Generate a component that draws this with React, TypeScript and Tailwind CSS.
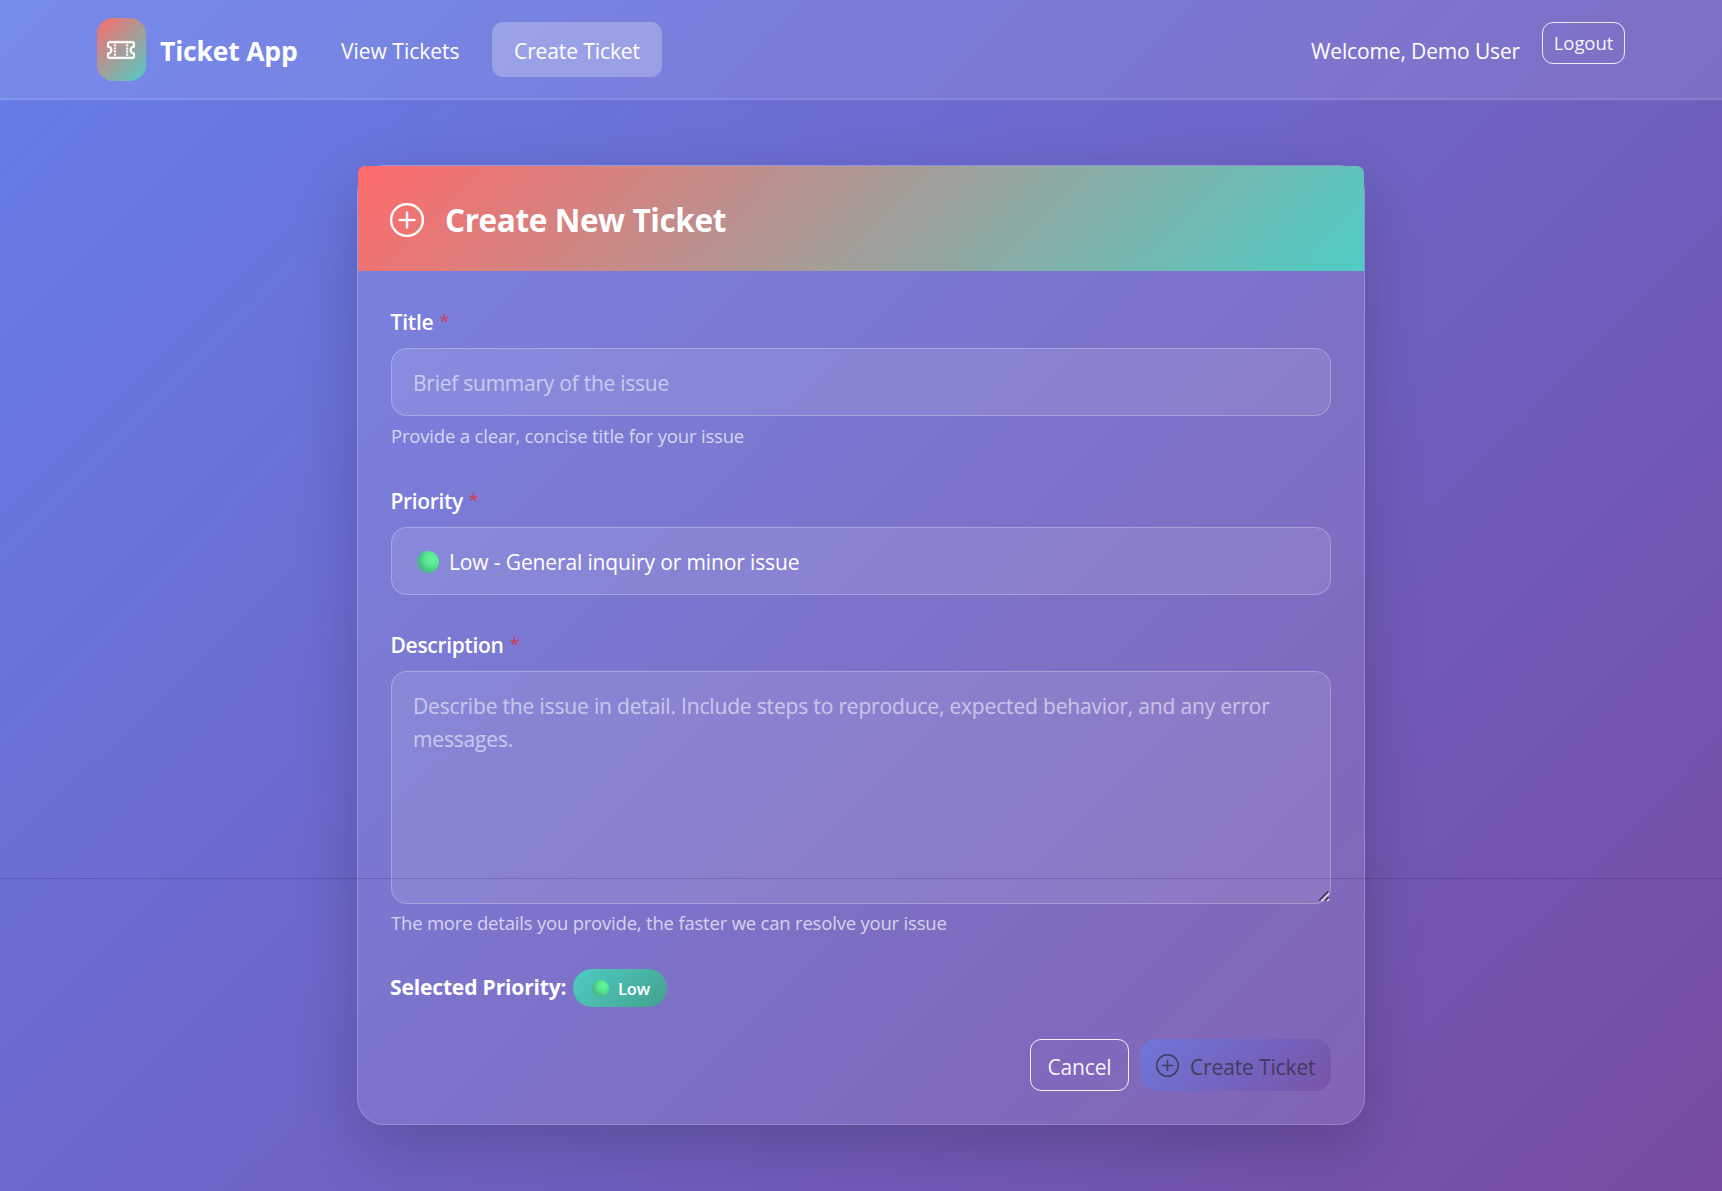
import type { ReactNode } from "react";
import { BsPlusCircle, BsTicketPerforated } from "react-icons/bs";

function GreenDot({ className }: { className: string }) {
  return (
    <span
      className={`inline-block shrink-0 rounded-full bg-[radial-gradient(circle_at_68%_36%,#66f79c_0%,#58e48f_35%,#46b883_68%,#6cbaa8_88%)] ${className}`}
    />
  );
}

function Label({ children, tracking }: { children: ReactNode; tracking: string }) {
  return (
    <label className="-ml-[0.5px] flex h-[33px] items-start gap-[6px] pt-px text-[21px] font-semibold leading-[33px]">
      <span className={tracking}>{children}</span>
      <span className="text-[18px] leading-[30px] text-[#dc3545]/80">*</span>
    </label>
  );
}

const field =
  "block w-full rounded-[16px] border border-white/25 bg-white/10 px-[21px] text-[21px] leading-[33px] text-white outline-none placeholder:text-white/55 placeholder:opacity-100";

function Navbar() {
  return (
    <nav className="flex h-[100px] items-start justify-between border-b-2 border-white/10 bg-white/10 px-[97px]">
      <div className="flex items-start">
        <div className="mt-[18px] flex h-[63px] w-[49px] items-center justify-center rounded-[16px] bg-[linear-gradient(135deg,#ff6b6b,#4ecdc4)]">
          <BsTicketPerforated className="mr-px size-[28px]" stroke="currentColor" strokeWidth={0.3} />
        </div>
        <span className="mt-[22px] ml-[14px] w-[138px] whitespace-nowrap pt-[2px] text-[26.5px] font-bold leading-[55px] tracking-[-0.19px]">
          Ticket App
        </span>
        <a className="mt-[22px] ml-[21px] w-[162px] whitespace-nowrap rounded-[11px] pt-[2px] pl-[22px] text-[21px] leading-[55px]">
          View Tickets
        </a>
        <a className="mt-[22px] ml-[11px] h-[55px] w-[170px] whitespace-nowrap rounded-[11px] bg-white/25 pt-[2px] pl-[22px] text-[21px] leading-[55px] tracking-[-0.1px]">
          Create Ticket
        </a>
      </div>
      <div className="flex items-start">
        <span className="mt-[22px] w-[231px] whitespace-nowrap pt-[2px] text-[21px] leading-[55px] tracking-[-0.14px]">
          Welcome, Demo User
        </span>
        <button className="mt-[22px] h-[42px] w-[83px] whitespace-nowrap rounded-[11px] border border-white/85 text-[18.5px] leading-[40px] tracking-[-0.06px] text-white/95">
          Logout
        </button>
      </div>
    </nav>
  );
}

export default function App() {
  return (
    <div
      className="relative h-[1191px] w-full overflow-hidden bg-[linear-gradient(135deg,#667eea_0%,#764ba2_100%)] text-white"
      style={{ fontFamily: '"Open Sans", "Noto Sans", sans-serif' }}
    >
      <Navbar />
      <main className="flex justify-center pt-[65px]">
        <section className="h-[960px] w-[1008px] rounded-[27px] border border-white/20 bg-white/10 shadow-[0_22px_62px_rgba(0,0,0,0.19)]">
          <header className="flex h-[105px] items-center rounded-t-[7px] bg-[linear-gradient(135deg,#ff6b6b,#4ecdc4)] pt-[2px] pl-[32px]">
            <BsPlusCircle className="size-[34px]" stroke="currentColor" strokeWidth={0.15} />
            <h1 className="ml-[21px] whitespace-nowrap text-[31.5px] font-bold leading-[40px] tracking-[-0.4px]">
              Create New Ticket
            </h1>
          </header>
          <form className="px-[33px] pt-[34px]">
            <Label tracking="tracking-[-0.2px]">Title</Label>
            <input
              className={`${field} mt-[10px] h-[68px] pt-[2px] tracking-[-0.25px]`}
              placeholder="Brief summary of the issue"
            />
            <p className="mt-[6px] text-[18.5px] leading-[28px] tracking-[-0.18px] text-white/70">
              Provide a clear, concise title for your issue
            </p>

            <div className="mt-[34px]">
              <Label tracking="tracking-[-0.35px]">Priority</Label>
              <div className={`${field} mt-[10px] h-[68px]`}>
                <div className="flex h-full items-center">
                  <GreenDot className="mt-px ml-[4px] size-[22px]" />
                  <span className="ml-[10px] whitespace-nowrap pt-[2px] tracking-[-0.13px]">
                    Low - General inquiry or minor issue
                  </span>
                </div>
              </div>
            </div>

            <div className="mt-[33px]">
              <Label tracking="tracking-[-0.3px]">Description</Label>
              <div className="relative mt-[10px]">
                <textarea
                  className={`${field} h-[233px] resize-none pt-[18px] tracking-[-0.17px]`}
                  placeholder="Describe the issue in detail. Include steps to reproduce, expected behavior, and any error messages."
                />
                <svg className="absolute right-[1px] bottom-[2px] size-[12px]" viewBox="0 0 12 12" fill="none">
                  <path d="M3.3 11L11 3.3M9 11.2L11.2 9" stroke="#e6dcf2" strokeWidth="1.7" />
                  <path d="M1.2 10.5L10.2 1.5M7.2 10.5L10.5 7.2" stroke="#3d3450" strokeWidth="1.7" />
                </svg>
              </div>
              <p className="mt-[5px] text-[18.5px] leading-[28px] tracking-[-0.2px] text-white/70">
                The more details you provide, the faster we can resolve your issue
              </p>
            </div>

            <div className="mt-[32px] flex h-[38px] items-center">
              <strong className="-ml-px w-[183px] whitespace-nowrap pb-[2px] text-[21px] font-bold leading-[38px] tracking-[-0.14px]">
                Selected Priority:
              </strong>
              <span className="flex h-[38px] w-[94px] items-center rounded-full bg-[linear-gradient(135deg,#4ecdc4,#44a08d)] pl-[19px] text-[16.5px] font-semibold leading-[38px] tracking-[-0.1px]">
                <GreenDot className="size-[17px]" />
                <span className="ml-[9px] pt-px">Low</span>
              </span>
            </div>

            <div className="mt-[32px] flex justify-end gap-[11px]">
              <button
                type="button"
                className="h-[52px] w-[99px] rounded-[11px] border border-white/90 pt-[2px] text-[21px] leading-[50px] tracking-[-0.16px] text-white/95"
              >
                Cancel
              </button>
              <button
                type="button"
                disabled
                className="flex h-[52px] w-[191px] items-center rounded-[16px] bg-[linear-gradient(135deg,#667eea,#764ba2)] pl-[16px] text-[21px] leading-[52px] tracking-[-0.14px] text-[#212529] opacity-65"
              >
                <BsPlusCircle className="mt-px size-[23px]" />
                <span className="ml-[11px] whitespace-nowrap pt-[3px]">Create Ticket</span>
              </button>
            </div>
          </form>
        </section>
      </main>
      <div className="pointer-events-none absolute inset-x-0 top-[878px] h-px bg-[#302070]/25" />
    </div>
  );
}
